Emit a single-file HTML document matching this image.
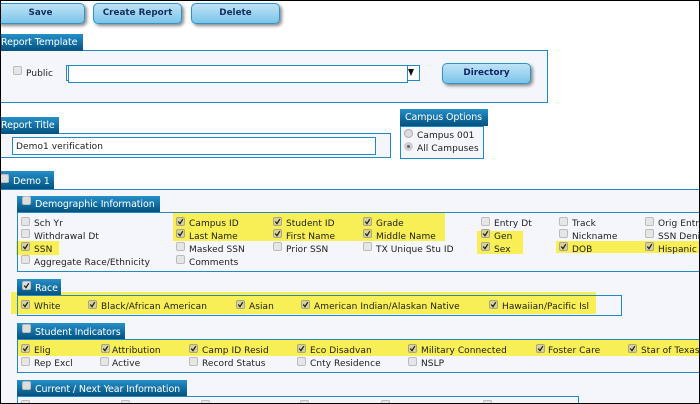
<!DOCTYPE html>
<html><head><meta charset="utf-8">
<style>
html,body{margin:0;padding:0;background:#fff;overflow:hidden;height:404px}
#p{position:relative;width:700px;height:404px;overflow:hidden;background:#fff;font-family:"DejaVu Sans","Liberation Sans",sans-serif;font-size:9px;color:#1c1c1c}
#p *{box-sizing:border-box}
.a{position:absolute}
.t{position:absolute;white-space:nowrap;line-height:12px;letter-spacing:.07px;margin-top:1px}
.y{position:absolute;background:#f8ef57}
.bx{position:absolute;border:1px solid #2189c6}
.h{position:absolute;height:17px;background:linear-gradient(#2590c9,#02527f);color:#fff;line-height:18px;white-space:nowrap;font-size:9.5px;letter-spacing:-.1px}
.b{position:absolute;height:21px;width:89px;border:1px solid #2b95c9;border-radius:5px;background:linear-gradient(#bfe3f6,#7cc4e9);box-shadow:2px 2px 3px #8a8a8a;color:#12305f;font-weight:bold;font-size:8.8px;text-align:center;line-height:19px}
.c{position:absolute;width:9px;height:9px;border:1px solid #bcbcbc;border-radius:2px;background:#e6e6e6}
.c.k{background:#d6d29c;border-color:#aaa77e}
.c.cut{height:3px;border-bottom:0;border-radius:2px 2px 0 0}
.c svg{position:absolute;left:0;top:0;width:7px;height:7px}
</style></head><body><div id="p">

<div class="b" style="left:-4px;top:3px">Save</div>
<div class="b" style="left:93px;top:3px">Create Report</div>
<div class="b" style="left:191px;top:3px">Delete</div>

<div class="bx" style="left:0;top:50px;width:548px;height:53px;background:#f5f6fc"></div>
<div class="h" style="left:0;top:34px;width:83px;padding-left:1px">Report Template</div>
<div class="c" style="left:13px;top:66px"></div>
<div class="t" style="left:26px;top:67px">Public</div>
<div class="a" style="left:66px;top:65px;width:354px;height:16px;border:1px solid #2189c6;background:#fff"></div>
<div class="a" style="left:68px;top:65px;width:340px;height:18px;border:1px solid #2189c6;background:#fff"></div>
<svg class="a" style="left:408px;top:69px" width="6" height="8"><path d="M0 0H6L3 7Z" fill="#111"/></svg>
<div class="b" style="left:442px;top:63px;color:#12246a">Directory</div>

<div class="bx" style="left:0;top:133px;width:391px;height:25px;background:#f5f6fc"></div>
<div class="h" style="left:0;top:117px;width:59px;padding-left:1px">Report Title</div>
<div class="a" style="left:12px;top:137px;width:364px;height:18px;border:1px solid #2189c6;background:#fff"></div>
<div class="t" style="left:16px;top:140px">Demo1 verification</div>

<div class="bx" style="left:400px;top:126px;width:84px;height:33px;background:#f5f6fc"></div>
<div class="h" style="left:400px;top:109px;width:88px;padding-left:5px">Campus Options</div>
<div class="a" style="left:404px;top:129px;width:9px;height:9px;border-radius:50%;border:1px solid #aaa;background:#ddd"></div>
<div class="t" style="left:417px;top:129px">Campus 001</div>
<div class="a" style="left:404px;top:142px;width:9px;height:9px;border-radius:50%;border:3px solid #cfcfcf;background:#666"></div>
<div class="t" style="left:417px;top:142px">All Campuses</div>

<div class="a" style="left:0;top:189px;width:700px;height:215px;background:#f5f6fc;border-top:1px solid #2189c6"></div>
<div class="h" style="left:0;top:171px;width:54px;height:18px;padding-left:13px;line-height:21px">Demo 1</div>
<div class="c" style="left:0;top:174px;background:#ddd"></div>

<!-- Demographic -->
<div class="y" style="left:173px;top:212px;width:272px;height:29px"></div>
<div class="y" style="left:16px;top:241px;width:43px;height:14px"></div>
<div class="y" style="left:477px;top:231px;width:46px;height:23px"></div>
<div class="y" style="left:556px;top:241px;width:144px;height:12px"></div>
<div class="bx" style="left:17px;top:212px;width:700px;height:60px"></div>
<div class="h" style="left:17px;top:196px;width:143px;height:16px;padding-left:18px;line-height:18px">Demographic Information</div>
<div class="c" style="left:22px;top:196px;background:#ddd"></div>

<div class="c" style="left:21px;top:217px"></div><div class="t" style="left:34px;top:217px">Sch Yr</div>
<div class="c k" style="left:176px;top:217px"><svg viewBox="0 0 7 7"><path d="M1.2 3.5L3 5.6L5.8 1.2" stroke="#222" stroke-width="1.3" fill="none"/></svg></div><div class="t" style="left:189px;top:217px">Campus ID</div>
<div class="c k" style="left:273px;top:217px"><svg viewBox="0 0 7 7"><path d="M1.2 3.5L3 5.6L5.8 1.2" stroke="#222" stroke-width="1.3" fill="none"/></svg></div><div class="t" style="left:286px;top:217px">Student ID</div>
<div class="c k" style="left:363px;top:217px"><svg viewBox="0 0 7 7"><path d="M1.2 3.5L3 5.6L5.8 1.2" stroke="#222" stroke-width="1.3" fill="none"/></svg></div><div class="t" style="left:376px;top:217px">Grade</div>
<div class="c" style="left:481px;top:217px"></div><div class="t" style="left:494px;top:217px">Entry Dt</div>
<div class="c" style="left:559px;top:217px"></div><div class="t" style="left:572px;top:217px">Track</div>
<div class="c" style="left:645px;top:217px"></div><div class="t" style="left:658px;top:217px">Orig Entry</div>

<div class="c" style="left:21px;top:229px"></div><div class="t" style="left:34px;top:230px">Withdrawal Dt</div>
<div class="c k" style="left:176px;top:229px"><svg viewBox="0 0 7 7"><path d="M1.2 3.5L3 5.6L5.8 1.2" stroke="#222" stroke-width="1.3" fill="none"/></svg></div><div class="t" style="left:189px;top:230px">Last Name</div>
<div class="c k" style="left:273px;top:229px"><svg viewBox="0 0 7 7"><path d="M1.2 3.5L3 5.6L5.8 1.2" stroke="#222" stroke-width="1.3" fill="none"/></svg></div><div class="t" style="left:286px;top:230px">First Name</div>
<div class="c k" style="left:363px;top:229px"><svg viewBox="0 0 7 7"><path d="M1.2 3.5L3 5.6L5.8 1.2" stroke="#222" stroke-width="1.3" fill="none"/></svg></div><div class="t" style="left:376px;top:230px">Middle Name</div>
<div class="c k" style="left:481px;top:229px"><svg viewBox="0 0 7 7"><path d="M1.2 3.5L3 5.6L5.8 1.2" stroke="#222" stroke-width="1.3" fill="none"/></svg></div><div class="t" style="left:494px;top:230px">Gen</div>
<div class="c" style="left:559px;top:229px"></div><div class="t" style="left:572px;top:230px">Nickname</div>
<div class="c" style="left:645px;top:229px"></div><div class="t" style="left:658px;top:230px">SSN Denied</div>

<div class="c k" style="left:21px;top:242px"><svg viewBox="0 0 7 7"><path d="M1.2 3.5L3 5.6L5.8 1.2" stroke="#222" stroke-width="1.3" fill="none"/></svg></div><div class="t" style="left:34px;top:243px">SSN</div>
<div class="c" style="left:176px;top:242px"></div><div class="t" style="left:189px;top:243px">Masked SSN</div>
<div class="c" style="left:273px;top:242px"></div><div class="t" style="left:286px;top:243px">Prior SSN</div>
<div class="c" style="left:363px;top:242px"></div><div class="t" style="left:376px;top:243px">TX Unique Stu ID</div>
<div class="c k" style="left:481px;top:242px"><svg viewBox="0 0 7 7"><path d="M1.2 3.5L3 5.6L5.8 1.2" stroke="#222" stroke-width="1.3" fill="none"/></svg></div><div class="t" style="left:494px;top:243px">Sex</div>
<div class="c k" style="left:559px;top:242px"><svg viewBox="0 0 7 7"><path d="M1.2 3.5L3 5.6L5.8 1.2" stroke="#222" stroke-width="1.3" fill="none"/></svg></div><div class="t" style="left:572px;top:243px">DOB</div>
<div class="c k" style="left:645px;top:242px"><svg viewBox="0 0 7 7"><path d="M1.2 3.5L3 5.6L5.8 1.2" stroke="#222" stroke-width="1.3" fill="none"/></svg></div><div class="t" style="left:658px;top:243px">Hispanic</div>

<div class="c" style="left:21px;top:255px"></div><div class="t" style="left:34px;top:256px">Aggregate Race/Ethnicity</div>
<div class="c" style="left:176px;top:255px"></div><div class="t" style="left:189px;top:256px">Comments</div>

<!-- Race -->
<div class="y" style="left:11px;top:292px;width:585px;height:22px"></div>
<div class="bx" style="left:17px;top:295px;width:605px;height:21px"></div>
<div class="h" style="left:17px;top:279px;width:44px;height:16px;padding-left:18px;line-height:19px">Race</div>
<div class="c" style="left:22px;top:281px;background:#ddd"><svg viewBox="0 0 7 7"><path d="M1.2 3.5L3 5.6L5.8 1.2" stroke="#222" stroke-width="1.3" fill="none"/></svg></div>
<div class="c k" style="left:21px;top:300px"><svg viewBox="0 0 7 7"><path d="M1.2 3.5L3 5.6L5.8 1.2" stroke="#222" stroke-width="1.3" fill="none"/></svg></div><div class="t" style="left:34px;top:300px">White</div>
<div class="c k" style="left:88px;top:300px"><svg viewBox="0 0 7 7"><path d="M1.2 3.5L3 5.6L5.8 1.2" stroke="#222" stroke-width="1.3" fill="none"/></svg></div><div class="t" style="left:101px;top:300px">Black/African American</div>
<div class="c k" style="left:236px;top:300px"><svg viewBox="0 0 7 7"><path d="M1.2 3.5L3 5.6L5.8 1.2" stroke="#222" stroke-width="1.3" fill="none"/></svg></div><div class="t" style="left:249px;top:300px">Asian</div>
<div class="c k" style="left:301px;top:300px"><svg viewBox="0 0 7 7"><path d="M1.2 3.5L3 5.6L5.8 1.2" stroke="#222" stroke-width="1.3" fill="none"/></svg></div><div class="t" style="left:314px;top:300px">American Indian/Alaskan Native</div>
<div class="c k" style="left:489px;top:300px"><svg viewBox="0 0 7 7"><path d="M1.2 3.5L3 5.6L5.8 1.2" stroke="#222" stroke-width="1.3" fill="none"/></svg></div><div class="t" style="left:502px;top:300px">Hawaiian/Pacific Isl</div>

<!-- Student Indicators -->
<div class="y" style="left:17px;top:339px;width:683px;height:17px"></div>
<div class="bx" style="left:17px;top:339px;width:700px;height:34px"></div>
<div class="h" style="left:17px;top:323px;width:108px;height:16px;padding-left:18px;line-height:19px">Student Indicators</div>
<div class="c" style="left:22px;top:324px;background:#ddd"></div>
<div class="c k" style="left:21px;top:344px"><svg viewBox="0 0 7 7"><path d="M1.2 3.5L3 5.6L5.8 1.2" stroke="#222" stroke-width="1.3" fill="none"/></svg></div><div class="t" style="left:34px;top:344px">Elig</div>
<div class="c k" style="left:101px;top:344px"><svg viewBox="0 0 7 7"><path d="M1.2 3.5L3 5.6L5.8 1.2" stroke="#222" stroke-width="1.3" fill="none"/></svg></div><div class="t" style="left:112px;top:344px">Attribution</div>
<div class="c k" style="left:189px;top:344px"><svg viewBox="0 0 7 7"><path d="M1.2 3.5L3 5.6L5.8 1.2" stroke="#222" stroke-width="1.3" fill="none"/></svg></div><div class="t" style="left:202px;top:344px">Camp ID Resid</div>
<div class="c k" style="left:297px;top:344px"><svg viewBox="0 0 7 7"><path d="M1.2 3.5L3 5.6L5.8 1.2" stroke="#222" stroke-width="1.3" fill="none"/></svg></div><div class="t" style="left:310px;top:344px">Eco Disadvan</div>
<div class="c k" style="left:408px;top:344px"><svg viewBox="0 0 7 7"><path d="M1.2 3.5L3 5.6L5.8 1.2" stroke="#222" stroke-width="1.3" fill="none"/></svg></div><div class="t" style="left:421px;top:344px">Military Connected</div>
<div class="c k" style="left:536px;top:344px"><svg viewBox="0 0 7 7"><path d="M1.2 3.5L3 5.6L5.8 1.2" stroke="#222" stroke-width="1.3" fill="none"/></svg></div><div class="t" style="left:548px;top:344px">Foster Care</div>
<div class="c k" style="left:628px;top:344px"><svg viewBox="0 0 7 7"><path d="M1.2 3.5L3 5.6L5.8 1.2" stroke="#222" stroke-width="1.3" fill="none"/></svg></div><div class="t" style="left:641px;top:344px">Star of Texas</div>

<div class="c" style="left:21px;top:357px"></div><div class="t" style="left:34px;top:357px">Rep Excl</div>
<div class="c" style="left:100px;top:357px"></div><div class="t" style="left:112px;top:357px">Active</div>
<div class="c" style="left:189px;top:357px"></div><div class="t" style="left:202px;top:357px">Record Status</div>
<div class="c" style="left:297px;top:357px"></div><div class="t" style="left:310px;top:357px">Cnty Residence</div>
<div class="c" style="left:408px;top:357px"></div><div class="t" style="left:421px;top:357px">NSLP</div>

<!-- Current -->
<div class="bx" style="left:17px;top:396px;width:562px;height:8px;border-bottom:0"></div>
<div class="h" style="left:17px;top:380px;width:170px;height:16px;padding-left:18px;line-height:19px">Current / Next Year Information</div>
<div class="c" style="left:22px;top:381px;background:#ddd"></div>
<div class="c cut" style="left:21px;top:400px"></div>
<div class="c cut" style="left:121px;top:400px"></div>
<div class="c cut" style="left:201px;top:400px"></div>
<div class="c cut" style="left:300px;top:400px"></div>
<div class="c cut" style="left:381px;top:400px"></div>
<div class="c cut" style="left:483px;top:400px"></div>

<!-- outer screenshot border -->
<div class="a" style="left:0;top:0;width:700px;height:1px;background:#000"></div>
<div class="a" style="left:0;top:0;width:1px;height:404px;background:#000"></div>
<div class="a" style="left:699px;top:0;width:1px;height:404px;background:#000"></div>
<div class="a" style="left:0;top:403px;width:700px;height:1px;background:#000"></div>
</div></body></html>
